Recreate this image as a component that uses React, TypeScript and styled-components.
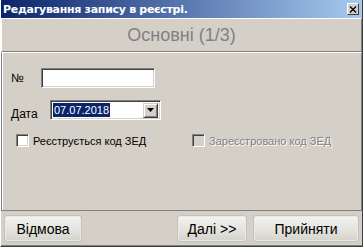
import React from "react";
import styled, { createGlobalStyle } from "styled-components";

const Global = createGlobalStyle`
  html, body { margin: 0; padding: 0; background: #d4d0c8; }
  body { font-family: "Liberation Sans", Arial, sans-serif; }
`;

const Window = styled.div`
  width: 363px;
  height: 247px;
  box-sizing: border-box;
  background: #d4d0c8;
  display: flex;
  flex-direction: column;
  border-right: 1px solid #404040;
  border-bottom: 1px solid #404040;
  border-left: 1px solid #ffffff;
  overflow: hidden;
`;

const TitleBar = styled.div`
  height: 18px;
  flex: none;
  display: flex;
  align-items: center;
  justify-content: space-between;
  padding: 0 2px 0 2px;
  background: linear-gradient(to right, #0a246a, #a6caf0);
`;

const Title = styled.span`
  color: #ffffff;
  font-family: "DejaVu Sans", Tahoma, sans-serif;
  font-weight: bold;
  font-size: 11px;
  letter-spacing: -0.3px;
  white-space: nowrap;
`;

const CloseBtn = styled.div`
  width: 12px;
  height: 12px;
  box-sizing: border-box;
  background: #d4d0c8;
  border-top: 1px solid #ffffff;
  border-left: 1px solid #ffffff;
  border-right: 1px solid #404040;
  border-bottom: 1px solid #404040;
  display: flex;
  align-items: center;
  justify-content: center;
  margin-right: 1px;
`;

const HeaderPanel = styled.div`
  height: 34px;
  flex: none;
  box-sizing: border-box;
  display: flex;
  align-items: center;
  justify-content: center;
  padding-top: 1px;
  border-top: 1px solid #ffffff;
  border-left: 1px solid #ffffff;
  border-bottom: 1px solid #808080;
  border-right: 1px solid #808080;
  font-size: 18px;
  color: #808080;
`;

const MainPanel = styled.div`
  height: 159px;
  flex: none;
  box-sizing: border-box;
  border-top: 1px solid #ffffff;
  border-left: 1px solid #808080;
  border-right: 1px solid #808080;
  border-bottom: 1px solid #808080;
  box-shadow: inset 1px 0 0 #ffffff;
  padding: 15px 0 0 9px;
  display: flex;
  flex-direction: column;
  gap: 12px;
`;

const FieldRow = styled.div<{ $labelWidth: number }>`
  display: grid;
  grid-template-columns: ${(p) => p.$labelWidth}px auto;
  align-items: start;
  font-size: 12px;
  color: #000;
`;

const Label = styled.span<{ $top: number }>`
  padding-top: ${(p) => p.$top}px;
  line-height: 13px;
`;

const TextBox = styled.div<{ $width: number }>`
  width: ${(p) => p.$width}px;
  height: 20px;
  box-sizing: border-box;
  background: #ffffff;
  border-top: 1px solid #808080;
  border-left: 1px solid #808080;
  border-right: 1px solid #ffffff;
  border-bottom: 1px solid #ffffff;
  box-shadow: inset 1px 1px 0 #404040, inset -1px -1px 0 #d4d0c8;
`;

const Combo = styled(TextBox)`
  display: flex;
  align-items: center;
  justify-content: space-between;
  padding: 2px 2px 2px 2px;
`;

const Selected = styled.span`
  background: #0a246a;
  color: #ffffff;
  font-size: 11px;
  line-height: 14px;
  height: 14px;
  padding: 0 1px;
`;

const DropBtn = styled.div`
  width: 15px;
  height: 15px;
  box-sizing: border-box;
  background: #d4d0c8;
  border-top: 1px solid #d4d0c8;
  border-left: 1px solid #d4d0c8;
  border-right: 1px solid #404040;
  border-bottom: 1px solid #404040;
  box-shadow: inset 1px 1px 0 #ffffff, inset -1px -1px 0 #808080;
  display: flex;
  align-items: center;
  justify-content: center;
`;

const CheckRow = styled.div`
  display: grid;
  grid-template-columns: 176px auto;
  padding-left: 5px;
  margin-top: 1px;
`;

const CheckItem = styled.label<{ $disabled?: boolean }>`
  display: flex;
  align-items: center;
  gap: 4px;
  font-size: 11px;
  color: ${(p) => (p.$disabled ? "#808080" : "#000")};
  text-shadow: ${(p) => (p.$disabled ? "1px 1px 0 #ffffff" : "none")};
  white-space: nowrap;
`;

const Box = styled.span<{ $disabled?: boolean }>`
  width: 13px;
  height: 13px;
  box-sizing: border-box;
  flex: none;
  background: ${(p) => (p.$disabled ? "#d4d0c8" : "#ffffff")};
  border-top: 1px solid #808080;
  border-left: 1px solid #808080;
  border-right: 1px solid #ffffff;
  border-bottom: 1px solid #ffffff;
  box-shadow: inset 1px 1px 0 #404040, inset -1px -1px 0 #d4d0c8;
`;

const Footer = styled.div`
  flex: 1;
  display: flex;
  align-items: flex-start;
  padding: 5px 4px 0 4px;
  gap: 8px;
  border-bottom: 1px solid #808080;
`;

const Spacer = styled.div`
  flex: 1;
`;

const Button = styled.div<{ $width: number }>`
  width: ${(p) => p.$width}px;
  height: 25px;
  box-sizing: border-box;
  display: flex;
  align-items: center;
  justify-content: center;
  font-size: 14px;
  color: #000;
  border: 1px solid #e8e8e4;
  border-radius: 2px;
  background: linear-gradient(#f2f2ee, #e4e3de 55%, #d6d4cc);
  box-shadow: 0 0 0 1px #c4c2ba;
`;

export default function App() {
  return (
    <>
      <Global />
      <Window>
        <TitleBar>
          <Title>Редагування запису в реєстрі.</Title>
          <CloseBtn>
            <svg width="8" height="7" viewBox="0 0 8 7">
              <path d="M1 0.5 L7 6.5 M7 0.5 L1 6.5" stroke="#000" strokeWidth="1.3" />
            </svg>
          </CloseBtn>
        </TitleBar>
        <HeaderPanel>Основні (1/3)</HeaderPanel>
        <MainPanel>
          <FieldRow $labelWidth={30}>
            <Label $top={4}>№</Label>
            <TextBox $width={114} />
          </FieldRow>
          <FieldRow $labelWidth={39}>
            <Label $top={8}>Дата</Label>
            <Combo $width={111}>
              <Selected>07.07.2018</Selected>
              <DropBtn>
                <svg width="7" height="4" viewBox="0 0 7 4">
                  <path d="M0 0 H7 L3.5 4 Z" fill="#000" />
                </svg>
              </DropBtn>
            </Combo>
          </FieldRow>
          <CheckRow>
            <CheckItem>
              <Box />
              Реєструється код ЗЕД
            </CheckItem>
            <CheckItem $disabled>
              <Box $disabled />
              Зареєстровано код ЗЕД
            </CheckItem>
          </CheckRow>
        </MainPanel>
        <Footer>
          <Button $width={76}>Відмова</Button>
          <Spacer />
          <Button $width={68}>Далі &gt;&gt;</Button>
          <Button $width={104}>Прийняти</Button>
        </Footer>
      </Window>
    </>
  );
}
